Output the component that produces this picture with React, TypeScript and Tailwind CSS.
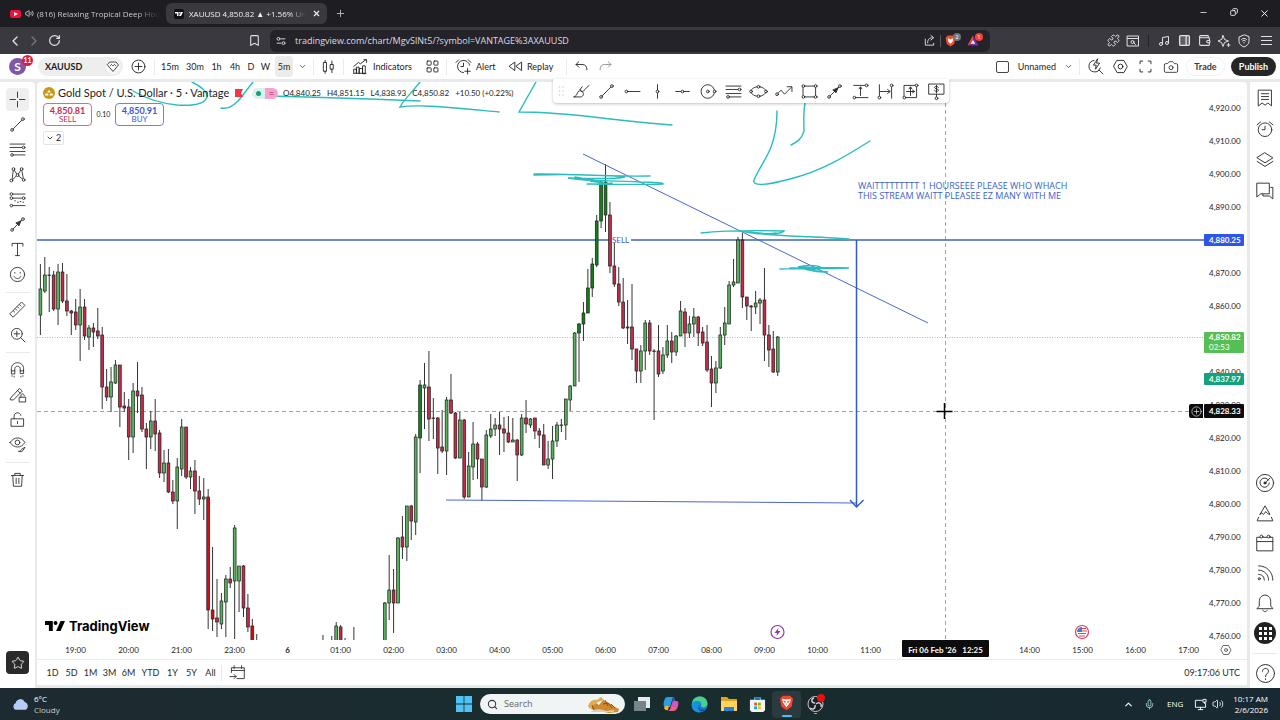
import React from 'react';
import {
  Bookmark,
  Camera,
  ChevronDown,
  ChevronLeft,
  ChevronRight,
  ChevronUp,
  Copy,
  Mic,
  Minus,
  Music,
  PanelRight,
  Plus,
  Puzzle,
  RotateCw,
  Search,
  Star,
  Volume2,
  Wallet,
  X,
} from 'lucide-react';

// [slot, high, body top, body bottom, low, kind]
// kinds: u = up, d = down, U / D = strong up / down
type Candle = [number, number, number, number, number, 'u' | 'd' | 'U' | 'D'];

const CANDLES: Candle[] = [
  [0, 264, 289, 315, 335, 'u'], [1, 257, 275, 291, 293, 'u'], [2, 267, 275, 275, 312, 'd'],
  [3, 271, 275, 309, 311, 'd'], [4, 264, 272, 309, 325, 'u'], [5, 263, 272, 301, 303, 'd'],
  [6, 274, 301, 311, 316, 'd'], [7, 310, 311, 313, 335, 'd'], [8, 299, 312, 325, 330, 'd'],
  [9, 289, 307, 325, 361, 'u'], [10, 299, 307, 336, 340, 'd'], [11, 325, 328, 337, 350, 'u'],
  [12, 323, 328, 332, 347, 'd'], [13, 308, 331, 336, 339, 'd'], [14, 327, 335, 387, 409, 'd'],
  [15, 369, 387, 397, 401, 'd'], [16, 367, 382, 397, 412, 'u'], [17, 360, 365, 383, 384, 'u'],
  [18, 365, 365, 407, 427, 'd'], [19, 392, 406, 408, 412, 'd'], [20, 399, 407, 437, 460, 'd'],
  [21, 383, 391, 437, 453, 'u'], [22, 362, 391, 396, 413, 'd'], [23, 387, 395, 429, 432, 'd'],
  [24, 423, 429, 437, 469, 'd'], [25, 411, 421, 437, 449, 'u'], [26, 399, 421, 434, 451, 'd'],
  [27, 430, 433, 473, 478, 'd'], [28, 450, 463, 473, 482, 'u'], [29, 449, 463, 492, 493, 'd'],
  [30, 480, 492, 501, 504, 'd'], [31, 458, 467, 501, 529, 'u'], [32, 419, 427, 469, 476, 'u'],
  [33, 427, 427, 477, 479, 'd'], [34, 467, 471, 477, 489, 'u'], [35, 460, 471, 491, 514, 'd'],
  [36, 476, 491, 499, 505, 'd'], [37, 478, 497, 499, 520, 'u'], [38, 489, 497, 610, 629, 'D'],
  [39, 547, 610, 619, 631, 'D'], [40, 579, 618, 622, 637, 'd'], [41, 593, 601, 624, 629, 'u'],
  [42, 575, 579, 602, 637, 'u'], [43, 567, 579, 583, 588, 'd'], [44, 525, 528, 581, 639, 'u'],
  [45, 566, 566, 581, 612, 'u'], [46, 565, 566, 608, 617, 'd'], [47, 594, 608, 627, 632, 'd'],
  [48, 619, 626, 641, 641, 'D'], [49, 634, 641, 641, 641, 'd'], [64, 635, 641, 641, 641, 'u'],
  [66, 636, 641, 641, 641, 'u'], [67, 622, 626, 641, 641, 'u'], [68, 625, 627, 641, 641, 'd'],
  [69, 638, 641, 641, 641, 'd'], [71, 627, 641, 641, 641, 'd'], [78, 602, 603, 641, 641, 'u'],
  [79, 555, 590, 603, 620, 'u'], [80, 569, 590, 603, 633, 'd'], [81, 537, 538, 603, 603, 'u'],
  [82, 516, 537, 547, 559, 'd'], [83, 506, 506, 547, 561, 'u'], [84, 505, 506, 521, 540, 'd'],
  [85, 434, 437, 522, 535, 'u'], [86, 380, 385, 438, 473, 'U'], [87, 363, 385, 388, 429, 'u'],
  [88, 351, 387, 419, 441, 'd'], [89, 398, 418, 418, 439, 'd'], [90, 417, 418, 448, 474, 'd'],
  [91, 410, 447, 451, 453, 'd'], [92, 397, 400, 451, 475, 'u'], [93, 374, 400, 413, 414, 'd'],
  [94, 412, 413, 458, 459, 'd'], [95, 412, 420, 458, 458, 'u'], [96, 419, 420, 497, 499, 'd'],
  [97, 452, 466, 497, 497, 'u'], [98, 422, 444, 467, 480, 'u'], [99, 442, 444, 459, 479, 'd'],
  [100, 459, 459, 487, 501, 'd'], [101, 430, 435, 487, 488, 'u'], [102, 414, 429, 436, 438, 'u'],
  [103, 418, 425, 429, 436, 'u'], [104, 412, 425, 429, 455, 'd'], [105, 417, 429, 433, 452, 'd'],
  [106, 416, 433, 442, 443, 'd'], [107, 418, 440, 442, 442, 'u'], [108, 439, 440, 455, 481, 'd'],
  [109, 414, 418, 455, 456, 'u'], [110, 400, 418, 424, 433, 'd'], [111, 418, 419, 425, 428, 'u'],
  [112, 418, 418, 431, 439, 'd'], [113, 428, 431, 435, 448, 'd'], [114, 424, 435, 465, 465, 'd'],
  [115, 441, 459, 465, 469, 'u'], [116, 426, 441, 459, 479, 'u'], [117, 422, 425, 441, 447, 'u'],
  [118, 419, 425, 425, 432, 'u'], [119, 399, 399, 425, 440, 'u'], [120, 385, 386, 400, 411, 'u'],
  [121, 332, 333, 386, 386, 'u'], [122, 323, 324, 333, 382, 'U'], [123, 302, 313, 324, 341, 'U'],
  [124, 269, 288, 313, 313, 'U'], [125, 258, 264, 288, 297, 'U'], [126, 215, 221, 265, 267, 'U'],
  [127, 181, 182, 221, 228, 'U'], [128, 164, 182, 215, 232, 'U'], [129, 202, 215, 266, 273, 'd'],
  [130, 243, 266, 284, 287, 'd'], [131, 267, 284, 302, 306, 'd'], [132, 278, 302, 328, 329, 'd'],
  [133, 300, 327, 328, 344, 'u'], [134, 284, 327, 349, 360, 'd'], [135, 349, 349, 371, 383, 'd'],
  [136, 345, 351, 371, 383, 'u'], [137, 320, 323, 351, 370, 'u'], [138, 320, 323, 351, 355, 'd'],
  [139, 349, 351, 351, 420, 'd'], [140, 325, 351, 374, 377, 'd'], [141, 347, 355, 371, 374, 'u'],
  [142, 325, 341, 355, 358, 'u'], [143, 332, 341, 352, 363, 'd'], [144, 335, 336, 352, 356, 'u'],
  [145, 301, 311, 336, 336, 'u'], [146, 308, 312, 333, 347, 'd'], [147, 316, 324, 333, 338, 'u'],
  [148, 308, 317, 324, 337, 'u'], [149, 316, 317, 333, 346, 'd'], [150, 327, 332, 343, 346, 'd'],
  [151, 325, 342, 370, 372, 'd'], [152, 356, 369, 383, 407, 'd'], [153, 361, 368, 383, 393, 'u'],
  [154, 327, 335, 368, 369, 'u'], [155, 307, 323, 335, 345, 'u'], [156, 281, 285, 324, 324, 'u'],
  [157, 259, 282, 285, 287, 'u'], [158, 237, 240, 283, 283, 'u'], [159, 233, 240, 297, 308, 'd'],
  [160, 297, 297, 306, 320, 'd'], [161, 305, 306, 307, 331, 'd'], [162, 291, 303, 307, 314, 'u'],
  [163, 298, 300, 303, 324, 'u'], [164, 268, 300, 335, 361, 'd'], [165, 325, 335, 350, 367, 'd'],
  [166, 331, 349, 372, 373, 'd'], [167, 336, 337, 372, 376, 'u'],
];

const CANDLE_FILL = { u: '#55b35a', d: '#c42b48', U: '#12801a', D: '#d80c12' };

// an empty label leaves room for the tag that covers it
const PRICES = [
  '4,920.00', '4,910.00', '4,900.00', '4,890.00', '', '4,870.00', '4,860.00', '', '4,840.00',
  '4,830.00', '4,820.00', '4,810.00', '4,800.00', '4,790.00', '4,780.00', '4,770.00', '4,760.00',
];

const TIMES = [
  '19:00', '20:00', '21:00', '23:00', '6', '01:00', '02:00', '03:00', '04:00', '05:00', '06:00',
  '07:00', '08:00', '09:00', '10:00', '11:00', '', '', '14:00', '15:00', '16:00', '17:00',
];

const RANGES = ['1D', '5D', '1M', '3M', '6M', 'YTD', '1Y', '5Y', 'All'];

const INK = [
  'M192 82C200 86 208 91 207 97C205 104 192 106 177 105C158 103 145 98 133 91',
  'M253 82C247 89 243 96 238 101C232 107 228 109 221 108',
  'M268 96C310 97 350 98 420 101',
  'M420 82C412 92 403 101 400 107C418 104 445 107 499 112',
  'M536 82L519 112C560 112 590 117 629 121C645 123 658 124 672 125',
  'M777 111C777 124 776 134 771 147C766 160 759 168 754 180C752 186 764 186 790 179C822 171 846 156 870 141',
  'M805 103C803 114 804 124 804 131C802 139 797 142 791 145',
  'M534 174C560 173 600 177 650 176M534 175C570 174 600 175 625 177C612 180 590 178 568 178C590 182 610 180 640 182C655 182 664 183 663 184C640 185 610 184 587 184M575 177C600 182 600 180 590 181C610 184 606 184 612 183',
  'M701 233C720 231 742 230 784 231C780 236 755 233 740 231C770 237 815 236 849 239M748 231C756 235 766 234 776 233',
  'M780 269C800 268 825 269 849 268C830 267 805 268 798 267C808 264 825 266 819 268C812 271 805 270 828 272C806 273 812 267 790 268',
];

interface GlyphProps {
  children: React.ReactNode;
  className?: string;
}

const Glyph: React.FC<GlyphProps> = ({ children, className = 'size-[19px]' }) => (
  <svg
    viewBox="0 0 28 28"
    className={className}
    fill="none"
    stroke="currentColor"
    strokeWidth="1.3"
    strokeLinecap="round"
    strokeLinejoin="round"
  >
    {children}
  </svg>
);

const Dot: React.FC<{ x: number; y: number }> = ({ x, y }) => <circle cx={x} cy={y} r="2" fill="white" />;

const TrendGlyph = (
  <Glyph><path d="M7 21 21 7" /><Dot x={6} y={22} /><Dot x={22} y={6} /></Glyph>
);
const FibGlyph = (
  <Glyph><path d="M3 6h22M3 11h18M3 17h22M8 22h17" /><Dot x={23} y={11} /><Dot x={6} y={22} /></Glyph>
);
const ArrowGlyph = (
  <Glyph><path d="M7 21 21 7" /><path d="m19 9-3 7-1-2-3-2Z" fill="currentColor" /><Dot x={6} y={22} /><Dot x={22} y={6} /></Glyph>
);

const LEFT_TOOLS: { name: string; icon: React.ReactNode }[][] = [
  [
    { name: 'Cross', icon: <Glyph><path d="M14 3v8M14 17v8M3 14h8M17 14h8" /></Glyph> },
    { name: 'Trend line', icon: TrendGlyph },
    { name: 'Fib retracement', icon: FibGlyph },
    {
      name: 'Patterns',
      icon: (
        <Glyph>
          <path d="M6 22 8 6l6 9 6-9 3 16-9-7Z" />
          <Dot x={5} y={23} /><Dot x={8} y={6} /><Dot x={14} y={15} /><Dot x={20} y={6} /><Dot x={23} y={22} />
        </Glyph>
      ),
    },
    {
      name: 'Forecasting',
      icon: (
        <Glyph>
          <path d="M8 6h17M8 12h12M8 23h17" /><path d="M10 16h1M14 18h1M18 17h1M22 18h1" />
          <Dot x={5} y={6} /><Dot x={23} y={12} /><Dot x={5} y={12} /><Dot x={5} y={23} />
        </Glyph>
      ),
    },
    { name: 'Arrow', icon: ArrowGlyph },
    { name: 'Text', icon: <Glyph><path d="M6 9V5h16v4M14 5v18M11 23h6" /></Glyph> },
    {
      name: 'Icons',
      icon: <Glyph><circle cx="14" cy="14" r="10.5" /><path d="M10 11v1M18 11v1M9 17c2 4 8 4 10 0" /></Glyph>,
    },
  ],
  [
    {
      name: 'Measure',
      icon: <Glyph><path d="m3 20 17-17 5 5L8 25ZM8 16l2 2M11 13l2 2M14 10l2 2M17 7l2 2" /></Glyph>,
    },
    { name: 'Zoom in', icon: <Glyph><circle cx="13" cy="13" r="8" /><path d="m19 19 6 6M9 13h8M13 9v8" /></Glyph> },
  ],
  [
    {
      name: 'Magnet',
      icon: <Glyph><path d="M5 20v-7c0-12 18-12 18 0v7h-5v-7c0-5-8-5-8 0v7ZM5 16h5M18 16h5M6 23v1M9 24v1M19 24v1M22 23v1" /></Glyph>,
    },
    {
      name: 'Keep drawing',
      icon: <Glyph><path d="M4 19 17 5l4 4L8 22H4zM14 8l4 4M17 18h9v7h-9zM19 18v-2c0-4 5-4 5 0" /></Glyph>,
    },
    { name: 'Lock drawings', icon: <Glyph><path d="M5 13h18v11H5zM9 13V9c0-6 9-7 10-1M14 17v3" /></Glyph> },
    {
      name: 'Hide drawings',
      icon: <Glyph><path d="M3 11c6-9 16-9 22 0-6 9-16 9-22 0ZM16 24c2 0 3-1 4-3l5-3-3 5c-2 2-4 2-6 1Z" /><circle cx="14" cy="11" r="3.5" /></Glyph>,
    },
  ],
  [{ name: 'Remove', icon: <Glyph><path d="M5 8h18M10 8V5h8v3M7 8l1 16h12l1-16M12 12v8M16 12v8" /></Glyph> }],
];

const FLOATING_TOOLS: { name: string; icon: React.ReactNode }[] = [
  { name: 'Brush', icon: <Glyph><path d="M3 22h10c4-1 5-5 2-8-3-2-6-1-7 2-1 3-2 5-5 6ZM12 11c1 4 5 4 7 0l6-6M12 11l3-4" /></Glyph> },
  { name: 'Trend line', icon: TrendGlyph },
  { name: 'Horizontal ray', icon: <Glyph><path d="M7 14h18" /><Dot x={5} y={14} /></Glyph> },
  { name: 'Vertical line', icon: <Glyph><path d="M14 4v20" /><Dot x={14} y={14} /></Glyph> },
  { name: 'Horizontal line', icon: <Glyph><path d="M4 14h20" /><Dot x={14} y={14} /></Glyph> },
  { name: 'Circle', icon: <Glyph><circle cx="13" cy="14" r="10" /><Dot x={13} y={14} /><Dot x={23} y={14} /></Glyph> },
  { name: 'Fib retracement', icon: FibGlyph },
  {
    name: 'Ellipse',
    icon: <Glyph><ellipse cx="14" cy="14" rx="11" ry="7" /><Dot x={3} y={14} /><Dot x={25} y={14} /><Dot x={14} y={7} /><Dot x={14} y={21} /></Glyph>,
  },
  { name: 'Path', icon: <Glyph><path d="m4 17 5-5 5 6L24 8M18 7h7v7" /><Dot x={3} y={18} /></Glyph> },
  {
    name: 'Rectangle',
    icon: <Glyph><path d="M5 6h18v16H5z" /><Dot x={5} y={6} /><Dot x={23} y={6} /><Dot x={5} y={22} /><Dot x={23} y={22} /></Glyph>,
  },
  { name: 'Arrow', icon: ArrowGlyph },
  { name: 'Price range', icon: <Glyph><path d="M4 5h17M7 23h18M14 8v12M12 10l2-3 2 3" /><Dot x={23} y={5} /><Dot x={5} y={23} /></Glyph> },
  { name: 'Date range', icon: <Glyph><path d="M5 4v17M23 7v17M6 14h14M17 11l4 3-4 3" /><Dot x={5} y={23} /><Dot x={23} y={5} /></Glyph> },
  {
    name: 'Date and price range',
    icon: <Glyph><path d="M5 5h18v18H5zM14 20V8M12 10l2-3 2 3M8 14h12M17 12l3 2-3 2" /><Dot x={5} y={23} /><Dot x={23} y={5} /></Glyph>,
  },
  {
    name: 'Price note',
    icon: <Glyph><path d="M3 3h22v15H3zM14 18v4M17 8c-1-2-6-2-6 0s6 2 6 4-5 3-6 0M14 5v11" /><Dot x={14} y={24} /></Glyph>,
  },
];

const RIGHT_TOP: { name: string; icon: React.ReactNode }[] = [
  { name: 'Watchlist', icon: <Glyph className="size-5"><path d="M5 3h18v22l-5-4-4 3-4-3-5 4ZM9 8h10M9 12h10M9 16h10" /></Glyph> },
  { name: 'Alerts', icon: <Glyph className="size-5"><circle cx="14" cy="15" r="9.5" /><path d="M14 10v5h-4M3 8l5-4M25 8l-5-4" /></Glyph> },
  { name: 'Object tree', icon: <Glyph className="size-5"><path d="m14 4 11 7-11 7-11-7ZM3 16l11 7 11-7" /></Glyph> },
  { name: 'Chats', icon: <Glyph className="size-5"><path d="M3 3h17v15H8l-5 4ZM22 9h3v16l-5-4h-9v-3" /></Glyph> },
];

const RIGHT_BOTTOM: { name: string; icon: React.ReactNode }[] = [
  { name: 'Screener', icon: <Glyph className="size-5"><circle cx="14" cy="14" r="12" /><path d="M19 10a6.5 6.5 0 1 0 1 4M14 14l7-7" /><circle cx="14" cy="14" r="1.5" fill="currentColor" /></Glyph> },
  { name: 'Pine', icon: <Glyph className="size-5"><path d="m7 16 7-12 7 12-3-1-3-3-3 4-3-2ZM5 20l-2 5h22l-2-5" /></Glyph> },
  { name: 'Calendar', icon: <Glyph className="size-5"><path d="M3 6h22v19H3zM3 12h22" /><Dot x={9} y={5} /><Dot x={19} y={5} /></Glyph> },
  { name: 'News', icon: <Glyph className="size-5"><path d="M5 4c12 0 20 9 20 20M5 10c8 0 14 6 14 14M5 16c5 0 8 3 8 8" /><circle cx="6" cy="22" r="1.5" /></Glyph> },
  { name: 'Notifications', icon: <Glyph className="size-5"><path d="M3 22h22l-3-4v-6c0-12-16-12-16 0v6ZM11 24c1 3 5 3 6 0" /></Glyph> },
];

const Sep: React.FC = () => <div className="mx-[2px] h-4 w-px shrink-0 bg-[#ebebeb]" />;

const TitleBar: React.FC = () => (
  <header className="flex h-[27px] shrink-0 items-center bg-[#1e1d22] text-[8px] text-[#c9c9cd]">
    <button className="flex h-[21px] w-[166px] items-center pl-[10px] text-left">
      <svg viewBox="0 0 11 8" className="h-2 w-[11px]"><rect width="11" height="8" rx="2" fill="#f0103c" /><path d="M4 2v4l4-2z" fill="white" /></svg>
      <Volume2 className="ml-1 size-[9px]" strokeWidth={2.4} />
      <span className="ml-[3px] mask-r-from-80% whitespace-nowrap">(816) Relaxing Tropical Deep Hou</span>
    </button>
    <div className="flex h-[21px] w-[161px] items-center rounded-md bg-[#3a393f] pr-[6px] pl-2 text-[#f0f0f2]">
      <svg viewBox="0 0 20 20" className="size-[10px]"><rect width="20" height="20" rx="4" fill="#111" /><path d="M2 6h7v8H6V9H2zM14 6h4l-4 8h-4z" fill="white" /><circle cx="11.5" cy="7.500" r="1.600" fill="white" /></svg>
      <span className="ml-[5px] mask-r-from-85% whitespace-nowrap">XAUUSD 4,850.82 ▲ +1.56% Un</span>
      <button aria-label="Close tab" className="ml-auto"><X className="size-[9px]" strokeWidth={3} /></button>
    </div>
    <button aria-label="New tab" className="ml-2"><Plus className="size-[11px]" strokeWidth={1.8} /></button>
    <div className="ml-auto flex text-white">
      <button aria-label="Minimize" className="flex w-[30px] justify-center"><Minus className="size-[9px]" /></button>
      <button aria-label="Restore" className="flex w-[31px] justify-center"><Copy className="size-[8px] -scale-x-100" strokeWidth={2.5} /></button>
      <button aria-label="Close" className="flex w-[31px] justify-center"><X className="size-[11px]" strokeWidth={2} /></button>
    </div>
  </header>
);

const AddressBar: React.FC = () => (
  <nav className="flex h-[27px] shrink-0 items-center bg-[#3a393f] text-[#e2e2e6]">
    <div className="flex w-[270px] items-center pl-[5px]">
      <button aria-label="Back" className="flex w-5 justify-center"><ChevronLeft className="size-4" strokeWidth={2} /></button>
      <button aria-label="Forward" className="flex w-[18px] justify-center text-[#77767c]"><ChevronRight className="size-4" strokeWidth={2} /></button>
      <button aria-label="Reload" className="flex w-[22px] justify-center"><RotateCw className="size-[13px]" strokeWidth={2.2} /></button>
      <button aria-label="Bookmark" className="mr-[9px] ml-auto"><Bookmark className="size-[13px]" strokeWidth={2} /></button>
    </div>
    <div className="flex h-[22px] flex-1 items-center rounded-md bg-[#242329] px-[6px]">
      <Glyph className="size-[10px]"><g strokeWidth="2.5"><circle cx="7" cy="8" r="4" /><path d="M14 8h11M3 20h11" /><circle cx="21" cy="20" r="4" /></g></Glyph>
      <input
        aria-label="Address"
        className="ml-[9px] min-w-0 flex-1 bg-transparent text-[9px] text-[#dcdce0] outline-none"
        defaultValue="tradingview.com/chart/MgvSlNt5/?symbol=VANTAGE%3AXAUUSD"
      />
      <button aria-label="Share"><Glyph className="size-[13px]"><path d="M5 11v13h18v-4M10 19c0-8 4-11 10-11M17 3l6 5-6 5" strokeWidth="2" /></Glyph></button>
      <div className="mx-[4px] h-3 w-px bg-[#5b5a60]" />
      <button aria-label="Brave Shields" className="relative w-4">
        <svg viewBox="0 0 20 22" className="h-3 w-[11px]"><path d="M5 1h10l4 4-2 11-7 5-7-5L1 5z" fill="#f0502a" /><path d="M5 6l5 2 5-2-1 6-4 4-4-4z" fill="white" /></svg>
        <span className="absolute -top-[2px] right-0 size-2 rounded-full bg-[#6f7480] text-center text-[6px] leading-2 text-white">2</span>
      </button>
      <button aria-label="Brave Rewards" className="relative ml-[6px] w-[17px]">
        <svg viewBox="0 0 22 20" className="h-[11px] w-3"><path d="M11 1 1 19h20z" fill="#7a2bb0" /><path d="M11 1 1 19l10-6z" fill="#f04a2a" /><path d="m11 9 4 7H7z" fill="white" /></svg>
        <span className="absolute -top-[2px] right-[1px] size-2 rounded-full bg-[#f0462e] text-center text-[6px] leading-2 text-white">1</span>
      </button>
    </div>
    <div className="flex w-[290px] items-center justify-end pr-[6px]">
      <button aria-label="Extensions" className="flex w-5 justify-center"><Puzzle className="size-[13px]" strokeWidth={1.8} /></button>
      <button aria-label="Search tabs" className="flex w-5 justify-center">
        <Glyph className="size-[14px]"><g strokeWidth="2"><path d="M3 4h22v20H3zM3 9h22" /><circle cx="13" cy="16" r="3" /><path d="m16 18 3 3" /></g></Glyph>
      </button>
      <div className="mx-[5px] h-3 w-px bg-[#222127]" />
      <button aria-label="Media" className="flex w-5 justify-center"><Music className="size-3" strokeWidth={2} /></button>
      <button aria-label="Sidebar" className="flex w-5 justify-center"><PanelRight className="size-[13px] fill-white/20" strokeWidth={2.4} /></button>
      <button aria-label="Wallet" className="flex w-5 justify-center"><Wallet className="size-[13px]" strokeWidth={2} /></button>
      <button aria-label="Leo AI" className="flex w-5 justify-center">
        <Glyph className="size-[14px]"><path d="m12 3 3 8 8 3-8 3-3 8-3-8-7-3 7-3ZM23 19v6M20 22h6" strokeWidth="2" /></Glyph>
      </button>
      <button aria-label="VPN" className="flex w-5 justify-center">
        <Glyph className="size-[14px]"><path d="M14 2 4 6v9c0 5 5 9 10 11 5-2 10-6 10-11V6ZM9 11c3-3 7-3 10 0M11 14c2-2 4-2 6 0M14 17v1" strokeWidth="2" /></Glyph>
      </button>
      <button aria-label="Menu" className="ml-1 flex w-4 flex-col items-center gap-[3px]">
        <span className="h-px w-[11px] bg-current" /><span className="h-px w-[11px] bg-current" /><span className="h-px w-[11px] bg-current" />
      </button>
    </div>
  </nav>
);

const ChartToolbar: React.FC = () => (
  <div className="flex h-[25px] shrink-0 items-center bg-white text-[9px] text-[#1c1c1c]">
    <button aria-label="Account" className="relative flex h-[25px] w-[38px] items-center pl-[9px]">
      <span className="size-[17px] rounded-full bg-[#7e57a5] text-center text-[12px] leading-[17px] font-bold text-white">S</span>
      <span className="absolute top-[1px] left-[22px] size-[11px] rounded-full bg-[#e0193f] text-center text-[7px] leading-[11px] font-bold text-white">11</span>
    </button>
    <div className="flex h-[19px] w-[85px] items-center justify-between rounded-full bg-[#eeeeee] pr-[3px] pl-[7px]">
      <button className="font-bold">XAUUSD</button>
      <button aria-label="Details" className="flex size-[14px] items-center justify-center rounded-full bg-[#f8f8f8]">
        <Glyph className="size-[15px]"><path d="M8 5h12l5 6-11 13L3 11ZM9 12l2-2 2 2M15 12l2-2 2 2" strokeWidth="1.600" /></Glyph>
      </button>
    </div>
    <button aria-label="Compare" className="ml-px flex w-7 justify-center">
      <Glyph><circle cx="14" cy="14" r="9.5" /><path d="M9 14h10M14 9v10" /></Glyph>
    </button>
    <Sep />
    <button className="w-[26px]">15m</button>
    <button className="w-6">30m</button>
    <button className="w-[19px]">1h</button>
    <button className="w-[18px]">4h</button>
    <button className="w-[14px]">D</button>
    <button className="w-[15px]">W</button>
    <button className="ml-[2px] h-[21px] w-[18px] rounded bg-[#ececec]">5m</button>
    <button aria-label="More intervals" className="flex w-[18px] justify-center"><ChevronDown className="size-[9px]" strokeWidth={1.8} /></button>
    <Sep />
    <button aria-label="Chart type" className="flex w-[25px] justify-center">
      <Glyph><path d="M7 8h4v13H7zM9 8V5M9 21v3M17 11h4v7h-4zM19 11V6M19 18v5" /></Glyph>
    </button>
    <Sep />
    <button className="flex w-[74px] items-center gap-[3px] pl-[5px]">
      <Glyph><path d="M4 14 11 8l3 2 8-6M19 4h4v4M4 24v-6h4v6M8 24V15h4v9M12 24v-7h5v7M17 24V13h4v11ZM4 24h18" /></Glyph>Indicators
    </button>
    <button aria-label="Layouts" className="flex w-6 justify-center">
      <Glyph><rect x="6" y="6" width="6" height="6" rx="1" /><rect x="16" y="6" width="6" height="6" rx="1" /><rect x="6" y="16" width="6" height="6" rx="1" /><rect x="16" y="16" width="6" height="6" rx="1" /></Glyph>
    </button>
    <Sep />
    <button className="flex w-[52px] items-center gap-[3px] pl-[5px]">
      <Glyph><path d="M23 12a9 9 0 1 0-9 11M14 9v5h-4M3 8l4-4M25 8l-4-4M20 17v8M16 21h8" /></Glyph>Alert
    </button>
    <button className="flex w-[63px] items-center gap-[2px] pl-[5px]">
      <Glyph><path d="M13 8v12l-8-6ZM23 8v12l-8-6Z" /></Glyph>Replay
    </button>
    <Sep />
    <button aria-label="Undo" className="flex w-6 justify-center"><Glyph><path d="m10 7-4 4 4 4M6 11h9c5 0 7 3 7 8" /></Glyph></button>
    <button aria-label="Redo" className="flex w-6 justify-center text-[#8b8b8b]"><Glyph><path d="m18 7 4 4-4 4M22 11h-9c-5 0-7 3-7 8" /></Glyph></button>
    <button className="ml-auto flex items-center gap-[9px]">
      <span className="h-3 w-[13px] rounded-[2px] border border-[#444]" />Unnamed
    </button>
    <button aria-label="Manage layouts" className="ml-1 flex w-[17px] justify-center"><ChevronDown className="size-[9px]" strokeWidth={1.8} /></button>
    <Sep />
    <button aria-label="Quick search" className="flex w-[26px] justify-center">
      <Glyph><path d="M12 5a8.500 8.500 0 1 0 9 11M19 19l6 6M17 3l-6 9h4l-1 6 6-9h-4Z" /></Glyph>
    </button>
    <button aria-label="Settings" className="flex w-[25px] justify-center">
      <Glyph><path d="M9 5h10l5 9-5 9H9l-5-9Z" /><circle cx="14" cy="14" r="3.5" /></Glyph>
    </button>
    <button aria-label="Fullscreen" className="flex w-[25px] justify-center"><Glyph><path d="M6 10V6h4M18 6h4v4M22 18v4h-4M10 22H6v-4" /></Glyph></button>
    <button aria-label="Snapshot" className="mr-[3px] flex w-[25px] justify-center"><Camera className="size-4" strokeWidth={1.2} /></button>
    <button className="h-[19px] w-[39px] rounded-full border border-[#f1f1f1] font-bold text-[#3a3a3a]">Trade</button>
    <button className="mr-1 ml-[6px] h-[19px] w-[45px] rounded-full bg-[#262626] font-bold text-white">Publish</button>
  </div>
);

const LeftToolbar: React.FC = () => (
  <aside className="flex w-[35px] shrink-0 flex-col items-center rounded-tr bg-white pt-[5px] text-[#2b2b2b]">
    {LEFT_TOOLS.map((group, i) => (
      <React.Fragment key={i}>
        {i > 0 && <div className="flex h-[10px] w-6 items-center"><div className="h-px w-full bg-[#e9e9e9]" /></div>}
        {group.map((tool) => (
          <button key={tool.name} aria-label={tool.name} className="flex h-[25px] items-center">
            <span className={tool.name === 'Cross' ? 'flex size-[23px] items-center justify-center rounded bg-[#efefef]' : ''}>
              {tool.icon}
            </span>
          </button>
        ))}
      </React.Fragment>
    ))}
    <button aria-label="Favorites" className="mt-auto mb-[14px] flex size-[23px] items-center justify-center rounded bg-[#2a2a2a] text-white">
      <Star className="size-[14px]" strokeWidth={1.4} />
    </button>
  </aside>
);

const RightToolbar: React.FC = () => (
  <aside className="flex w-[30px] shrink-0 flex-col items-center bg-white text-[#2b2b2b]">
    {RIGHT_TOP.map((item) => (
      <button key={item.name} aria-label={item.name} className="flex h-[31px] items-center">{item.icon}</button>
    ))}
    <div className="flex-1" />
    {RIGHT_BOTTOM.map((item) => (
      <button key={item.name} aria-label={item.name} className="flex h-[30px] items-center">{item.icon}</button>
    ))}
    <button aria-label="Products" className="flex h-[30px] items-center">
      <span className="grid size-[22px] grid-cols-[repeat(3,3px)] content-center justify-center gap-[2px] rounded-full bg-[#222]">
        {Array.from({ length: 9 }, (_, i) => <span key={i} className="size-[3px] bg-white" />)}
      </span>
    </button>
    <div className="flex h-[10px] w-6 items-center"><div className="h-px w-full bg-[#e9e9e9]" /></div>
    <button aria-label="Help" className="flex h-[30px] items-center">
      <Glyph className="size-[21px]"><circle cx="14" cy="14" r="12" /><path d="M10 11c0-5 8-5 8 0 0 3-4 3-4 7M14 21v1" /></Glyph>
    </button>
  </aside>
);

const Legend: React.FC = () => (
  <div className="absolute top-[4px] left-[6px] text-[#1c1c1c]">
    <div className="flex h-[14px] items-center whitespace-nowrap">
      <svg viewBox="0 0 24 24" className="size-3"><circle cx="12" cy="12" r="12" fill="#c79a12" /><path d="m9 11 1-4h4l1 4zM4 17l1-4h5l1 4zM13 17l1-4h5l1 4z" fill="white" /></svg>
      <h1 className="ml-[3px] w-[177px] text-[11px]">Gold Spot / U.S. Dollar · 5 · Vantage</h1>
      <svg viewBox="0 0 8 8" className="size-2"><path d="M0 0h8L6 4l2 4H0z" fill="#f23645" /></svg>
      <span className="ml-[9px] flex h-[11px] w-[13px] items-center justify-center rounded-l-full bg-[#ddf1ec]"><span className="size-[5px] rounded-full bg-[#0ea37f]" /></span>
      <span className="h-[11px] w-[13px] rounded-r-full bg-[#f5a3cd] text-center text-[10px] leading-[10px] text-[#9c1f5f]">=</span>
      <p className="ml-[5px] flex gap-[6px] text-[8px]">
        <span>O4,840.25</span><span>H4,851.15</span><span>L4,838.93</span><span>C4,850.82</span><span>+10.50 (+0.22%)</span>
      </p>
    </div>
    <div className="mt-[3px] flex items-center">
      <button className="flex h-[23px] w-[49px] flex-col items-center justify-center rounded border border-[#d0708a] text-[8px] leading-[9px] text-[#c22f50]">
        <b className="text-[9px]">4,850.81</b>SELL
      </button>
      <span className="w-[23px] text-center text-[7px]">0.10</span>
      <button className="flex h-[23px] w-[49px] flex-col items-center justify-center rounded border border-[#6f83dc] text-[8px] leading-[9px] text-[#3c58d0]">
        <b className="text-[9px]">4,850.91</b>BUY
      </button>
    </div>
    <button aria-label="Show indicators legend" className="mt-[5px] flex h-[14px] w-[21px] items-center justify-center gap-[2px] rounded-[2px] border border-[#e4e4e4] bg-white text-[9px]">
      <ChevronDown className="size-2" strokeWidth={2.5} />2
    </button>
  </div>
);

const FloatingToolbar: React.FC = () => (
  <div className="absolute -top-[3px] left-[516px] flex h-[24px] w-[396px] items-center rounded-b bg-white text-[#222] shadow-[0_1px_3px_rgba(0,0,0,0.25)]">
    <Glyph className="size-4"><path d="M11 7h1M11 14h1M11 21h1M17 7h1M17 14h1M17 21h1" stroke="#aaa" /></Glyph>
    {FLOATING_TOOLS.map((tool) => (
      <button key={tool.name} aria-label={tool.name} className="flex flex-1 justify-center">{tool.icon}</button>
    ))}
  </div>
);

const Plot: React.FC = () => (
  <svg className="h-full w-full" role="img" aria-label="XAUUSD candles">
    <g transform="translate(-37 -82)">
      <path d="M37 337.500H1204" stroke="#a8bfa8" strokeDasharray="1 1.500" />
      <path d="M37 411.500H1190M945.500 82V641" stroke="#a3a3a3" strokeDasharray="4 3" />
      <path d="M37 240H611M631 240H1204" stroke="#3f66b8" strokeWidth="1.700" />
      {CANDLES.map(([slot, high, top, bottom, low, kind]) => {
        const x = 40.4 + slot * 4.415;
        return (
          <g key={slot} stroke="#1d1d1d" strokeWidth="0.7">
            <path d={`M${x} ${high}V${low}`} strokeWidth="0.9" />
            <rect x={x - 1.4} y={top} width="2.8" height={Math.max(bottom - top, 0.4)} fill={CANDLE_FILL[kind]} />
          </g>
        );
      })}
      <g fill="none" stroke="#4a66cf">
        <path d="M583 154 928 323M446 500l410 3" />
        <path d="M856.500 240V507M850 500l6.500 7 7-7" stroke="#2f5bd0" strokeWidth="1.500" />
      </g>
      <g fill="none" stroke="#2bbdbd" strokeWidth="1.400" strokeLinecap="round">
        {INK.map((d) => <path key={d} d={d} />)}
      </g>
      <g fill="#3a62c9">
        <text x="612" y="243" fontSize="8">SELL</text>
        <g className="font-['Open_Sans','Noto_Sans',sans-serif]" fontSize="9">
          <text x="858" y="189">WAITTTTTTTTT 1 HOURSEEE PLEASE WHO WHACH</text>
          <text x="858" y="199">THIS STREAM WAITT PLEASEE EZ MANY WITH ME</text>
        </g>
      </g>
      <path d="M944.500 403v16M936.500 411.500h16" stroke="#000" strokeWidth="1.500" />
      <g transform="translate(777.500 632)">
        <circle r="6.500" fill="white" stroke="#8e3aa8" strokeWidth="1.200" />
        <path d="m1-4-4 5h2.500L-1 4l4-5H.5z" fill="#8e3aa8" />
      </g>
      <g transform="translate(1082 632)">
        <circle r="6.500" fill="white" stroke="#d8405c" strokeWidth="1.200" />
        <path d="M-5-1h10M-4 1.500h8M-3 4h6M0-3.500h4" stroke="#e0485c" strokeWidth="1.200" />
        <path d="M-5 0a5 5 0 0 1 5-5v5z" fill="#3f83d0" />
      </g>
    </g>
  </svg>
);

const PriceAxis: React.FC = () => (
  <div className="relative w-[43px] shrink-0 pt-[9px] text-[8px] text-[#1c1c1c]">
    {PRICES.map((price, i) => (
      <div key={i} className="flex h-[33px] items-center pl-[5px]">{price}</div>
    ))}
    <div className="absolute top-[152px] left-0 h-3 w-10 rounded-[1px] bg-[#2c56ea] pl-[5px] leading-3 font-bold text-white">4,880.25</div>
    <div className="absolute top-[250px] left-0 flex h-[21px] w-10 flex-col rounded-[1px] bg-[#55bf55] pl-[5px] leading-[10px] text-white">
      <b>4,850.82</b>
      <span>02:53</span>
    </div>
    <div className="absolute top-[291px] left-0 h-3 w-10 rounded-[1px] bg-[#10a37c] pl-[5px] leading-3 font-bold text-white">4,837.97</div>
    <div className="absolute top-[322px] left-0 h-[14px] w-10 rounded-[1px] bg-[#0c0c0c] pl-[5px] leading-[14px] font-bold text-white">4,828.33</div>
    <button aria-label="Add at price" className="absolute top-[322px] -left-[15px] flex h-[14px] w-[14px] items-center justify-center rounded-l-[2px] bg-[#0c0c0c] text-white">
      <Glyph className="size-[13px]"><circle cx="14" cy="14" r="10" /><path d="M9 14h10M14 9v10" /></Glyph>
    </button>
  </div>
);

const Chart: React.FC = () => (
  <main className="flex min-w-0 flex-1 flex-col rounded-t bg-white">
    <div className="relative flex min-h-0 flex-1">
      <div className="min-w-0 flex-1"><Plot /></div>
      <PriceAxis />
      <Legend />
      <FloatingToolbar />
      <div className="absolute bottom-1 left-2 flex items-center gap-[4px] font-[Inter] text-[13px] font-bold text-black">
        <svg viewBox="0 0 36 18" className="h-[10px] w-5"><path d="M0 0h14v18H7V7H0zM28 0h8l-8 18h-8z" /><circle cx="19" cy="3.5" r="3.5" /></svg>
        TradingView
      </div>
    </div>
    <div className="relative flex h-5 shrink-0 items-center border-b border-[#ececec] pl-3 text-[8px] text-[#1c1c1c]">
      {TIMES.map((time, i) => (
        <span key={i} className={time === '6' ? 'w-[53px] shrink-0 text-center font-bold' : 'w-[53px] shrink-0 text-center'}>{time}</span>
      ))}
      <button aria-label="Axis settings" className="flex w-[22px] shrink-0 justify-center">
        <Glyph className="size-[14px]"><path d="M9 5h10l5 9-5 9H9l-5-9Z" /><circle cx="14" cy="14" r="3" /></Glyph>
      </button>
      <div className="absolute top-0 left-[865px] h-[17px] w-[87px] rounded-[1px] bg-[#0c0c0c] text-center leading-[20px] font-bold whitespace-pre text-white">Fri 06 Feb '26   12:25</div>
    </div>
    <div className="flex h-[25px] shrink-0 items-center pl-[6px] text-[9px] text-[#2b2b2b]">
      {RANGES.map((range) => (
        <button key={range} className={range === 'YTD' ? 'w-[25px]' : 'w-[19px]'}>{range}</button>
      ))}
      <div className="ml-px h-4 w-px bg-[#e6e6e6]" />
      <button aria-label="Go to date" className="ml-[6px]">
        <Glyph><path d="M5 14V7h19v16H13M5 11h19M9 4v4M20 4v4M3 20h9M9 17l3 3-3 3" /></Glyph>
      </button>
      <button className="mr-[7px] ml-auto">09:17:06 UTC</button>
    </div>
  </main>
);

const Taskbar: React.FC = () => (
  <footer className="grid h-8 shrink-0 grid-cols-[1fr_auto_1fr] items-center bg-linear-to-r from-[#1e2a31] via-[#182d2d] to-[#182932] text-[8px] text-white">
    <button className="flex items-center gap-[5px] pl-3 text-left leading-[11px]">
      <svg viewBox="0 0 32 22" className="h-3 w-[17px]"><path d="M7 22a7 7 0 0 1 0-13 9 9 0 0 1 17-2 8 8 0 0 1 1 15z" fill="#b8cdf5" /></svg>
      <span>6°C<br /><span className="text-[#c5ced2]">Cloudy</span></span>
    </button>
    <div className="flex items-center">
      <button aria-label="Start" className="flex w-[29px] justify-center">
        <svg viewBox="0 0 16 16" className="size-4" fill="#4fc3f7"><path d="M0 0h7.600v7.600H0zM8.400 0H16v7.600H8.400zM0 8.400h7.600V16H0zM8.400 8.400H16V16H8.400z" /></svg>
      </button>
      <label className="mx-[2px] flex h-5 w-[145px] items-center rounded-full bg-[#f0f4f5] pr-1 pl-[7px] text-[#333]">
        <Search className="size-[11px]" strokeWidth={2.2} />
        <input aria-label="Search" placeholder="Search" className="ml-[6px] w-0 flex-1 bg-transparent text-[9px] outline-none placeholder:text-[#666]" />
        <svg viewBox="0 0 34 18" className="h-[18px] w-[34px]">
          <path d="M4 14c1-4 3-6 5-6l3 2 4-5 6 3 6 4 4 2-1 3-9 1z" fill="#cf8a30" /><path d="M1 11c2-5 5-7 9-6l4-3 3 3-6 2-3 2-5 5z" fill="#e0ad52" />
          <path d="M4 17c4-4 10-3 15-1l9-1-2 2z" fill="#d9d2c4" /><path d="m16 9 5-1 4 5M18 5l3 6M24 9l4 4M5 10l2 5" stroke="#8a5318" fill="none" />
        </svg>
      </label>
      <button aria-label="Task view" className="flex w-[29px] justify-center">
        <svg viewBox="0 0 18 16" className="h-4 w-[18px]"><path d="M5 1h12v11H5z" fill="#e8ebec" /><path d="M1 5h12v10H1z" fill="#77848a" /></svg>
      </button>
      <button aria-label="Copilot" className="flex w-[29px] justify-center">
        <svg viewBox="0 0 18 16" className="h-4 w-[18px]"><path d="M5 1h6L8 11H3C0 11 2 1 5 1z" fill="#2b9de0" /><path d="M3 10h4l-1 4C3 15 1 12 3 10z" fill="#f1b52c" /><path d="M11 1c2 0 2 4 3 5h-4z" fill="#3650c8" /><path d="M12 5h3c3 0 1 10-3 10H6c3 0 3-10 6-10z" fill="#d955b0" /><path d="M10 11h4c-1 3-3 4-5 4z" fill="#ee6b58" /></svg>
      </button>
      <button aria-label="Edge" className="flex w-[29px] justify-center">
        <svg viewBox="0 0 18 18" className="size-[17px]"><circle cx="9" cy="9" r="8.5" fill="#1a79cf" /><path d="M1 8C2-2 17-2 17.500 8c0 5-7 5-7 2 2-4-5-7-9.500-2z" fill="#4bd08c" /><path d="M1 8c4-4 9-3 9.500 0-3 0-4 7 3 7-5 5-14 1-12.500-7z" fill="#1593dc" /><path d="M8 9c-1 4 3 7 8 5-3 4-10 3-8-5z" fill="#0d4f9c" /></svg>
      </button>
      <button aria-label="File Explorer" className="flex w-[29px] justify-center">
        <svg viewBox="0 0 18 16" className="h-4 w-[18px]"><path d="M1 1h6l2 2h8v5H1z" fill="#e0a320" /><path d="M1 5h16v10H1z" fill="#ffd35c" /><path d="M4 11h10v4H4z" fill="#2a7fd0" /></svg>
      </button>
      <button aria-label="Microsoft Store" className="flex w-[29px] justify-center">
        <svg viewBox="0 0 18 18" className="size-[17px]"><path d="M6 5V2h6v3" stroke="#3aa5e8" strokeWidth="1.500" fill="none" /><path d="M1 4h16v11l-2 2H3l-2-2z" fill="#f2f5f7" /><path d="M5.500 7h3v3h-3z" fill="#f25022" /><path d="M9.500 7h3v3h-3z" fill="#7fba00" /><path d="M5.500 11h3v3h-3z" fill="#00a4ef" /><path d="M9.500 11h3v3h-3z" fill="#ffb900" /></svg>
      </button>
      <button aria-label="Brave" className="flex h-[27px] w-[29px] flex-col items-center justify-end rounded bg-[#2a3a3f] pb-px">
        <svg viewBox="0 0 20 22" className="mb-[4px] h-4 w-[15px]"><path d="M5 1h10l4 4-2 11-7 5-7-5L1 5z" fill="#f4452a" /><path d="m4 5 4 1h4l4-1-1 5-2 3-3 4-3-4-2-3z" fill="white" /><path d="m6 8 3 1-1 2zM14 8l-3 1 1 2zM10 11v3" fill="#f4452a" stroke="#f4452a" strokeWidth=".5" /></svg>
        <span className="h-[2px] w-[10px] rounded-full bg-[#5cb8f0]" />
      </button>
      <button aria-label="OBS Studio" className="flex w-[30px] justify-center">
        <svg viewBox="0 0 18 20" className="h-5 w-[18px]"><circle cx="8.5" cy="10" r="7.500" fill="#1d1d22" stroke="#c9ccd0" /><path d="M8 9C4 9 4 5 7 4M9 10c3-3 6 0 5 3M8 11c1 4-3 5-5 3" stroke="#c9ccd0" strokeWidth="1.500" fill="none" /><circle cx="14" cy="4" r="4" fill="#e81010" /><path d="M7 19.500h3" stroke="#9aa" /></svg>
      </button>
    </div>
    <div className="flex items-center justify-end pr-3">
      <button aria-label="Hidden icons" className="mr-[10px]"><ChevronUp className="size-[11px]" strokeWidth={2.5} /></button>
      <button aria-label="Microphone" className="mr-3 text-[#9fd6d8]"><Mic className="size-[11px]" /></button>
      <button className="mr-[11px]">ENG</button>
      <button aria-label="Network" className="mr-[5px]">
        <Glyph className="size-[13px]"><path d="M17 5H3v15h22v-8M9 25h10M14 20v5M20 3h6v6h-6zM23 9v3" strokeWidth="2" /></Glyph>
      </button>
      <button aria-label="Volume" className="mr-[9px]"><Volume2 className="size-3" strokeWidth={1.6} /></button>
      <button className="text-right leading-[11px]">10:17 AM<br />2/6/2026</button>
    </div>
  </footer>
);

const App: React.FC = () => {
  return (
    <div className="flex h-screen flex-col overflow-hidden bg-[#e8e9eb] font-['Open_Sans','Noto_Sans',sans-serif]">
      <TitleBar />
      <AddressBar />
      <div className="flex min-h-0 flex-1 flex-col gap-[3px] font-[Lato,'Open_Sans',sans-serif]">
        <ChartToolbar />
        <div className="flex min-h-0 flex-1">
          <LeftToolbar />
          <div className="flex min-w-0 flex-1 pr-[3px] pb-[3px] pl-[2px]"><Chart /></div>
          <RightToolbar />
        </div>
      </div>
      <Taskbar />
    </div>
  );
};

export default App;
